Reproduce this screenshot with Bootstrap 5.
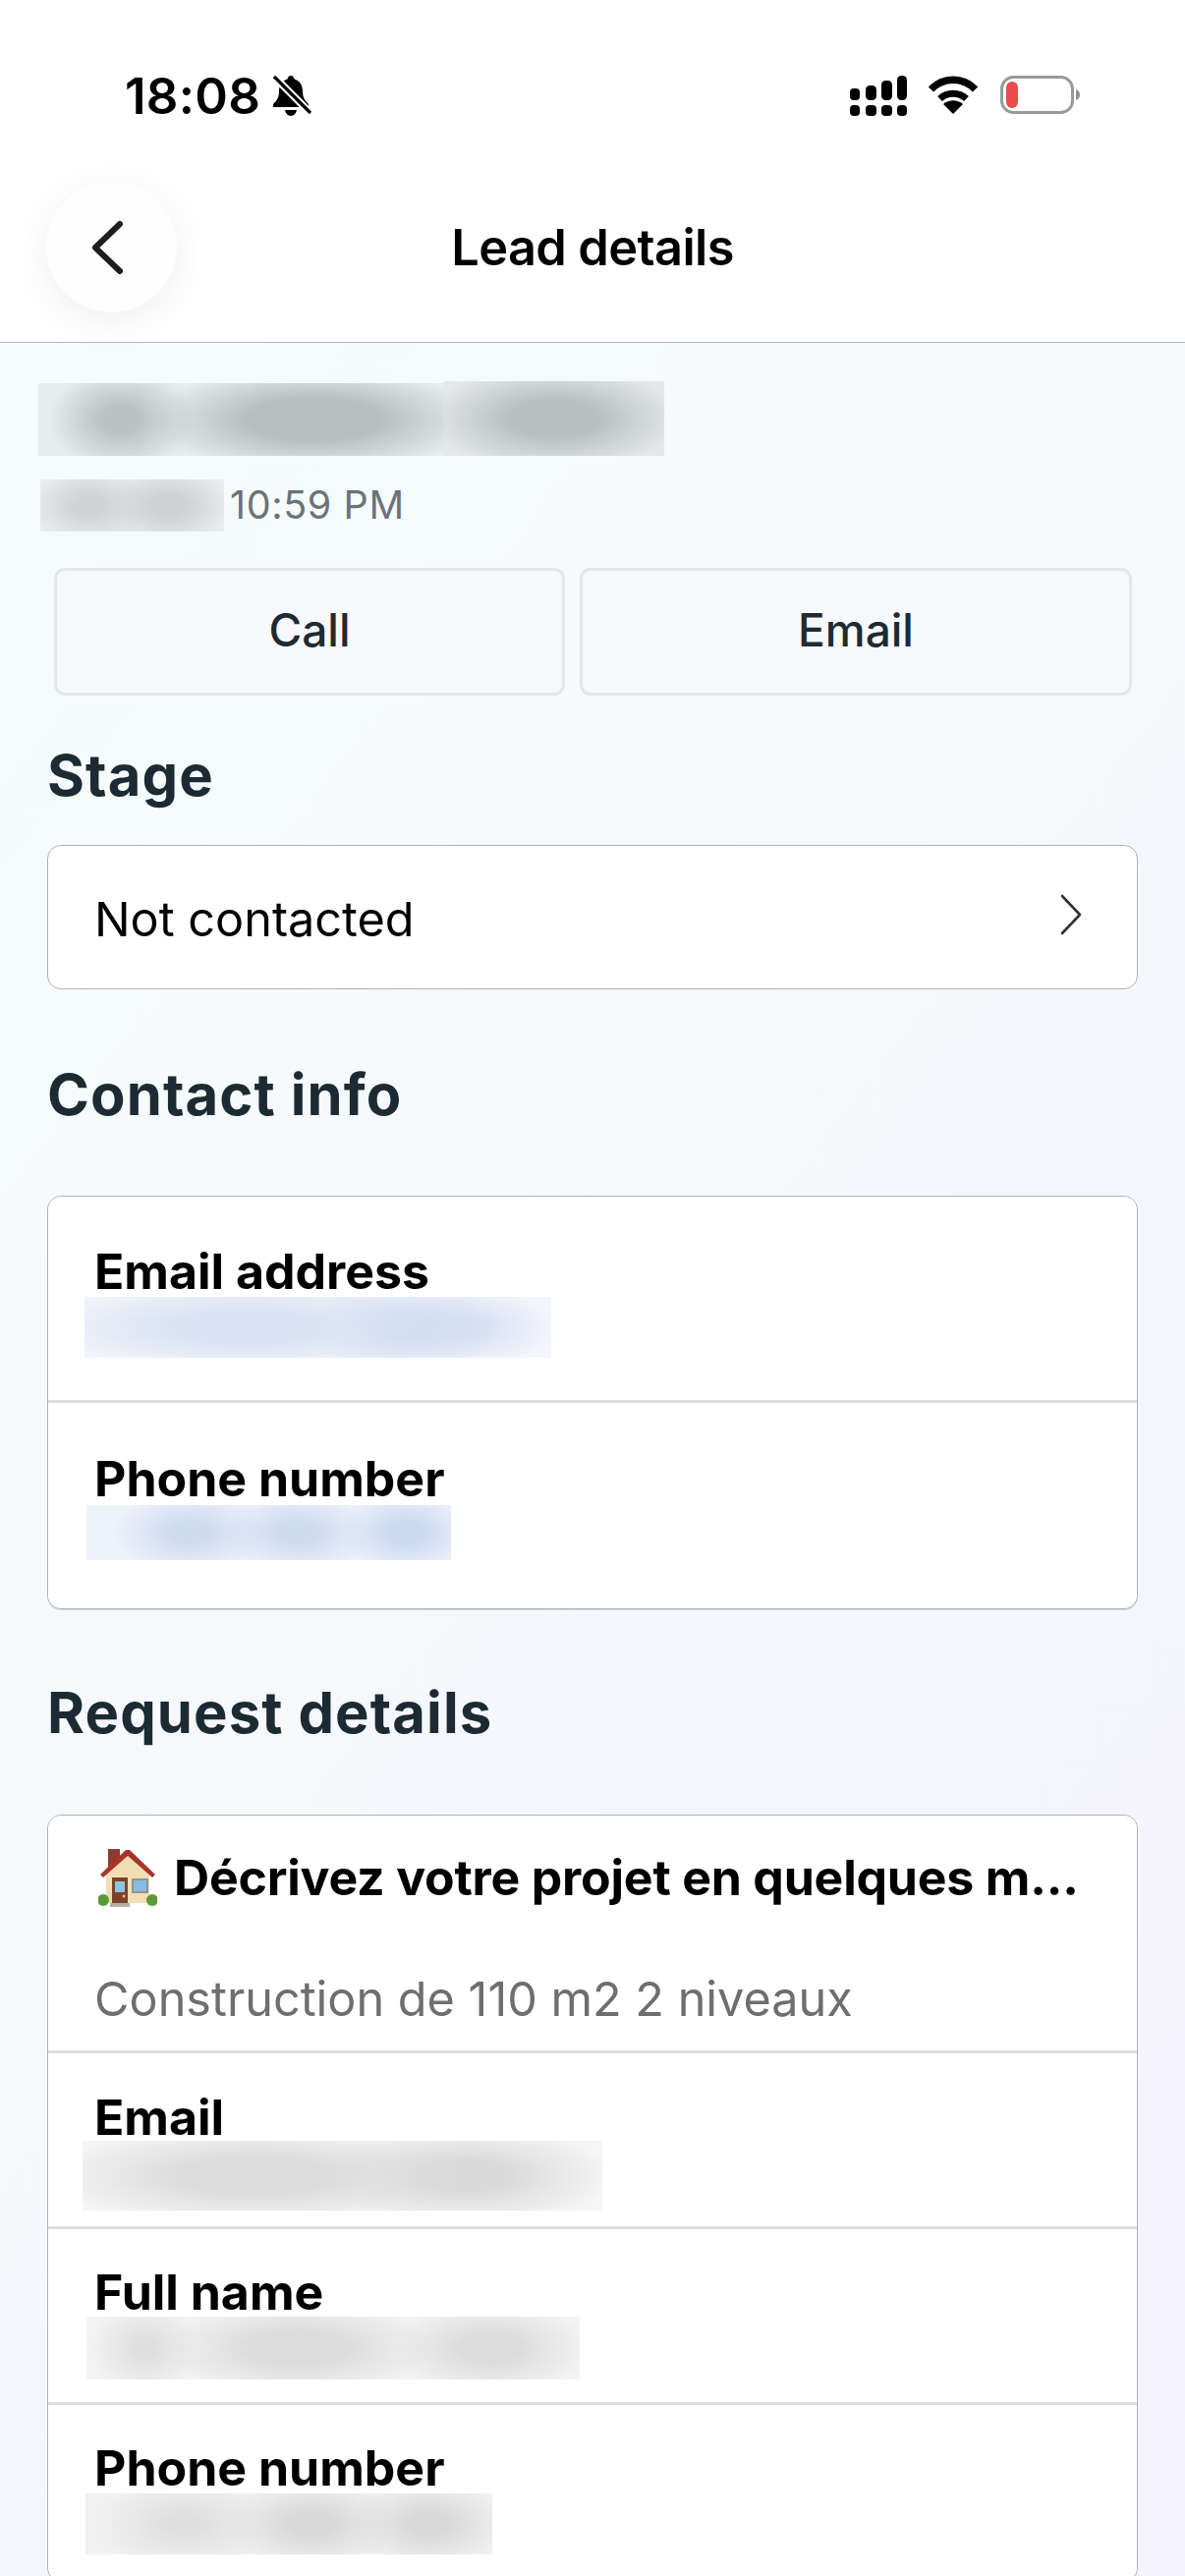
<!DOCTYPE html>
<html lang="en">
<head>
    <meta charset="UTF-8">
    <meta name="viewport" content="width=device-width, initial-scale=1.0">
    <title>Lead details</title>
    <link rel="stylesheet" href="https://cdn.jsdelivr.net/npm/bootstrap@5.3.0/dist/css/bootstrap.min.css">
    <style>
        html, body {
            height: 2622px;
            overflow: hidden;
        }
        body {
            font-family: Inter, "Liberation Sans", sans-serif;
            color: #000;
            background: linear-gradient(128deg, #f4fdfb 0%, #f6f9fb 40%, #f5f5fd 75%, #f4f3fe 100%);
        }
        .top-area {
            height: 349px;
            background: #fff;
            border-bottom: 1px solid #b4b6b8;
        }
        .status-bar {
            height: 185px;
            padding: 68px 106px 0 127px;
            align-items: flex-start;
        }
        .clock-group { gap: 13px; }
        .clock {
            font-size: 51px;
            line-height: 60px;
            font-weight: 600;
            letter-spacing: .3px;
        }
        .ic-signal { margin: 9px 20px 0 0; }
        .ic-wifi { margin: 8px 23px 0 0; }
        .ic-battery { margin-top: 9px; }
        .nav-row {
            height: 163px;
            padding-left: 47px;
        }
        .back-btn, .nav-spacer {
            width: 133px;
            height: 133px;
            flex: none;
        }
        .back-btn {
            padding: 0;
            border: 0;
            border-radius: 50%;
            background: #fdfdfd;
            box-shadow: 0 8px 44px rgba(0, 0, 0, .07);
        }
        .nav-title {
            font-size: 50.5px;
            line-height: 60px;
            font-weight: 600;
            margin: 0 47px 30px 0;
            letter-spacing: -.6px;
        }
        .page-body {
            padding: 0 48px;
        }
        .name-row {
            margin: 39px 0 0 -9px;
            align-items: flex-end;
        }
        .date-row {
            margin: 24px 0 0 -7px;
        }
        .time-text {
            font-size: 39.5px;
            line-height: 53px;
            letter-spacing: .6px;
            color: #6b7378;
            margin-left: 6px;
        }
        .action-row {
            margin: 37px 6px 0 7px;
            gap: 15px;
        }
        .action-btn {
            height: 130px;
            padding: 0 0 3px;
            font-size: 46px;
            font-weight: 500;
            color: #1c2b33;
            background: #f7f8fb;
            border: 3px solid #e3e6ea;
            border-radius: 11px;
        }
        .action-btn:first-child { width: 520px; }
        .action-btn:last-child { width: 562px; }
        .sect-title {
            font-size: 58px;
            line-height: 80px;
            font-weight: 700;
            letter-spacing: 1.1px;
            color: #1c2b33;
            margin: 0;
        }
        .sect-stage { margin: 41px 0 31px; }
        .sect-contact { margin: 67px 0 63px; }
        .sect-request { margin: 65px 0 64px; }
        .lead-card {
            --bs-card-border-color: #aeb1b6;
            --bs-card-border-radius: 14px;
            --bs-card-inner-border-radius: 13px;
            --bs-card-border-width: 1px;
            overflow: hidden;
        }
        .contact-card { box-shadow: 0 1px 0 #d6d7d9; }
        .stage-card {
            height: 145px;
            padding: 0 55px 0 47px;
            font-size: 48.6px;
        }
        .stage-text { padding-top: 6px; }
        .stage-arrow { margin-bottom: 6px; }
        .lead-card .list-group-item {
            padding: 0 0 0 47px;
            color: #000;
            border-color: #dcdddf;
            border-width: 0 0 3px;
        }
        .field-label {
            font-size: 50px;
            line-height: 50px;
            font-weight: 700;
            margin: 0;
        }
        .lead-card .row-mail { height: 210px; padding-top: 51px; }
        .lead-card .row-phone { height: 209px; padding-top: 52px; }
        .lead-card .row-question { height: 242px; padding-top: 33px; }
        .lead-card .row-field { height: 179px; padding-top: 39px; }
        .lead-card .row-first { padding-top: 40px; }
        .question-line { gap: 17px; }
        .question-text {
            font-size: 50px;
            line-height: 60px;
            font-weight: 700;
            letter-spacing: -.2px;
            white-space: nowrap;
        }
        .answer-text {
            font-size: 48.6px;
            line-height: 60px;
            color: #6e6e6e;
            margin: 64px 0 0;
        }
        .house-icon {
            width: 60px;
            height: 60px;
            margin-left: 4px;
            flex: none;
        }
        /* redacted values: soft grey or blue smudges with a hard outer edge */
        .smudge { flex: none; }
        .sm-name-a {
            width: 413px; height: 74px;
            background:
                radial-gradient(ellipse 75px 54px at 84px 50%, #bbc2c3 25%, transparent),
                radial-gradient(ellipse 170px 54px at 280px 50%, #b8bfc0 40%, transparent),
                #e7eded;
        }
        .sm-name-b {
            width: 224px; height: 76px;
            background:
                radial-gradient(ellipse 130px 54px at 112px 50%, #bac0c2 35%, transparent),
                #e4e8e9;
        }
        .sm-date {
            width: 187px; height: 53px;
            background:
                radial-gradient(ellipse 62px 40px at 50px 50%, #d0d4d5 25%, transparent),
                radial-gradient(ellipse 66px 40px at 130px 50%, #cdd1d2 25%, transparent),
                #e9eded;
        }
        .sm-blue-mail {
            width: 475px; height: 62px;
            margin: 1px 0 0 -10px;
            background:
                radial-gradient(ellipse 220px 46px at 165px 50%, #dae3f3 35%, transparent),
                radial-gradient(ellipse 100px 46px at 325px 50%, #d0dcf0 25%, transparent),
                radial-gradient(ellipse 80px 40px at 395px 50%, #dbe3f4 25%, transparent),
                #f3f5fb;
        }
        .sm-blue-phone {
            width: 371px; height: 56px;
            margin: 2px 0 0 -8px;
            background:
                radial-gradient(ellipse 78px 42px at 105px 50%, #cfdbf1 25%, transparent),
                radial-gradient(ellipse 78px 42px at 215px 50%, #cfdbf1 25%, transparent),
                radial-gradient(ellipse 68px 42px at 325px 50%, #cbd9f1 25%, transparent),
                #eef2fa;
        }
        .sm-grey-mail {
            width: 529px; height: 71px;
            margin: -1px 0 0 -12px;
            background:
                radial-gradient(ellipse 220px 52px at 175px 50%, #dcdcdc 35%, transparent),
                radial-gradient(ellipse 150px 52px at 390px 50%, #dadada 30%, transparent),
                #f6f6f6;
        }
        .sm-grey-name {
            width: 502px; height: 64px;
            margin: 0 0 0 -8px;
            background:
                radial-gradient(ellipse 55px 48px at 60px 50%, #dfdfdf 20%, transparent),
                radial-gradient(ellipse 140px 48px at 215px 50%, #dcdcdc 35%, transparent),
                radial-gradient(ellipse 100px 48px at 410px 50%, #dcdcdc 30%, transparent),
                #f3f3f3;
        }
        .sm-grey-phone {
            width: 414px; height: 62px;
            margin: 1px 0 0 -9px;
            background:
                radial-gradient(ellipse 90px 46px at 100px 50%, #dfdfdf 20%, transparent),
                radial-gradient(ellipse 90px 46px at 230px 50%, #d9d9d9 25%, transparent),
                radial-gradient(ellipse 80px 46px at 350px 50%, #d9d9d9 25%, transparent),
                #f1f1f1;
        }
    </style>
</head>
<body>
    <!-- Status bar and title -->
    <header class="top-area">
        <div class="status-bar d-flex justify-content-between">
            <div class="clock-group d-flex align-items-center">
                <span class="clock">18:08</span>
                <svg width="40" height="44" viewBox="0 0 40 44">
                    <path d="M18 1c2 0 3 1.500 3.500 3.500C27 6 30 11 30 17c0 6 2 9 6 13v3H0v-3c4-4 6-7 6-13 0-6 3-11 8.500-12.500C15 2.500 16 1 18 1z"/>
                    <path d="M12 36h12c-.5 3-3 6-6 6s-5.500-3-6-6z"/>
                    <path d="M1 2l37 37" stroke="#fff" stroke-width="7.500"/>
                    <path d="M1 2l37 37" stroke="#000" stroke-width="3.200"/>
                </svg>
            </div>
            <div class="d-flex align-items-start">
                <svg class="ic-signal" width="60" height="42" viewBox="0 0 60 42">
                    <rect x="0" y="13" width="10" height="12" rx="4"/>
                    <rect x="16" y="10" width="11" height="15" rx="4.500"/>
                    <rect x="32" y="5" width="11" height="20" rx="4.500"/>
                    <rect x="48" y="0" width="10" height="25" rx="4.500"/>
                    <rect x="0" y="30" width="10" height="11" rx="4"/>
                    <rect x="16" y="30" width="11" height="11" rx="4"/>
                    <rect x="32" y="30" width="11" height="11" rx="4"/>
                    <rect x="48" y="30" width="10" height="11" rx="4"/>
                </svg>
                <svg class="ic-wifi" width="50" height="40" viewBox="0 0 50 40">
                    <path d="M2.500 15a31 31 0 0 1 45 0" fill="none" stroke="#000" stroke-width="7.500"/>
                    <path d="M11.500 24.500a20 20 0 0 1 27 0" fill="none" stroke="#000" stroke-width="7"/>
                    <path d="M15 30c6-5 14-5 20 0L25 40z"/>
                </svg>
                <svg class="ic-battery" width="82" height="40" viewBox="0 0 82 40">
                    <rect x="1.500" y="1.500" width="72" height="36" rx="12" fill="none" stroke="#999" stroke-width="3"/>
                    <rect x="6" y="6" width="12" height="27" rx="6" fill="#e94b4b"/>
                    <path d="M77 14c3 1 4 3 4 5.500S80 24 77 25z" fill="#8f8f8f"/>
                </svg>
            </div>
        </div>
        <div class="nav-row d-flex align-items-start">
            <button type="button" class="back-btn d-flex align-items-center justify-content-center">
                <svg width="40" height="62" viewBox="0 0 40 62" class="me-2">
                    <path d="M32 7L7 31l25 24" fill="none" stroke="#1c1e21" stroke-width="6" stroke-linecap="round" stroke-linejoin="round"/>
                </svg>
            </button>
            <div class="flex-grow-1 d-flex justify-content-center align-items-center h-100">
                <h1 class="nav-title">Lead details</h1>
            </div>
            <div class="nav-spacer"></div>
        </div>
    </header>

    <main class="page-body">
        <!-- Lead name and date -->
        <div class="name-row d-flex">
            <div class="smudge sm-name-a"></div>
            <div class="smudge sm-name-b"></div>
        </div>
        <div class="date-row d-flex">
            <div class="smudge sm-date"></div>
            <span class="time-text">10:59 PM</span>
        </div>

        <!-- Actions -->
        <div class="action-row d-flex">
            <button type="button" class="action-btn">Call</button>
            <button type="button" class="action-btn">Email</button>
        </div>

        <!-- Stage -->
        <h2 class="sect-title sect-stage">Stage</h2>
        <div class="card lead-card">
            <div class="stage-card d-flex align-items-center justify-content-between">
                <span class="stage-text">Not contacted</span>
                <svg class="stage-arrow" width="24" height="42" viewBox="0 0 24 42">
                    <path d="M3 2l18 19L3 40" fill="none" stroke="#333" stroke-width="2.600" stroke-linecap="round" stroke-linejoin="round"/>
                </svg>
            </div>
        </div>

        <!-- Contact info -->
        <h2 class="sect-title sect-contact">Contact info</h2>
        <div class="card lead-card contact-card">
            <div class="list-group list-group-flush">
                <div class="list-group-item row-mail">
                    <p class="field-label">Email address</p>
                    <div class="smudge sm-blue-mail"></div>
                </div>
                <div class="list-group-item row-phone">
                    <p class="field-label">Phone number</p>
                    <div class="smudge sm-blue-phone"></div>
                </div>
            </div>
        </div>

        <!-- Request details -->
        <h2 class="sect-title sect-request">Request details</h2>
        <div class="card lead-card">
            <div class="list-group list-group-flush">
                <div class="list-group-item row-question">
                    <div class="question-line d-flex align-items-center">
                        <svg class="house-icon" viewBox="0 0 60 60">
                            <rect x="10" y="1" width="12" height="18" fill="#8c3b2e"/>
                            <path d="M30 5L52 25v31H8V25z" fill="#f2deb5"/>
                            <path d="M2 27L28 2h4l26 25-3 3L30 8 5 30z" fill="#a8352c"/>
                            <rect x="14" y="30" width="16" height="27" fill="#7c4228"/>
                            <rect x="17" y="34" width="10" height="11" fill="#8cc3e8"/>
                            <circle cx="26" cy="49" r="1.500" fill="#e8b878"/>
                            <rect x="34" y="31" width="17" height="15" fill="#96928a"/>
                            <rect x="36" y="33" width="13" height="11" fill="#84bde6"/>
                            <circle cx="5" cy="53" r="6" fill="#5c9a38"/>
                            <circle cx="55" cy="53" r="6" fill="#5c9a38"/>
                            <rect x="12" y="56" width="20" height="4" fill="#b5b0a4"/>
                        </svg>
                        <span class="question-text">Décrivez votre projet en quelques m...</span>
                    </div>
                    <p class="answer-text">Construction de 110 m2 2 niveaux</p>
                </div>
                <div class="list-group-item row-field row-first">
                    <p class="field-label">Email</p>
                    <div class="smudge sm-grey-mail"></div>
                </div>
                <div class="list-group-item row-field">
                    <p class="field-label">Full name</p>
                    <div class="smudge sm-grey-name"></div>
                </div>
                <div class="list-group-item row-field">
                    <p class="field-label">Phone number</p>
                    <div class="smudge sm-grey-phone"></div>
                </div>
            </div>
        </div>
    </main>
    <script src="https://cdn.jsdelivr.net/npm/bootstrap@5.3.0/dist/js/bootstrap.bundle.min.js"></script>
</body>
</html>
